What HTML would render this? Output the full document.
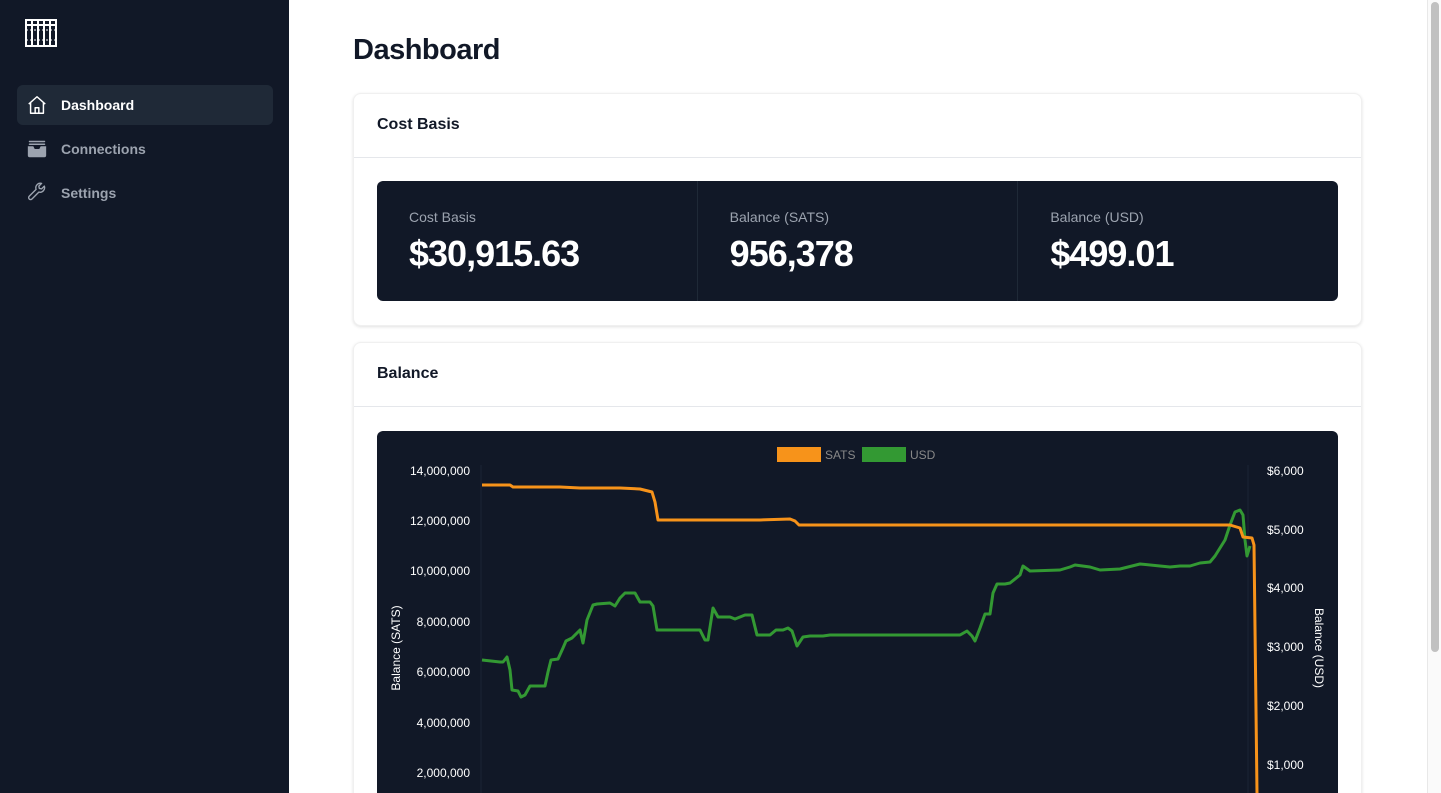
<!DOCTYPE html>
<html style="overflow:hidden"><head><meta charset="utf-8"><style>
*{box-sizing:border-box;margin:0;padding:0}
html,body{width:1441px;height:793px;overflow:hidden}
body{background:#fff;font-family:"Liberation Sans",sans-serif;position:relative}
.side{position:absolute;left:0;top:0;width:289px;height:793px;background:#111827}
.nav{position:absolute;left:17px;width:256px;height:40px;border-radius:6px;display:flex;align-items:center;padding-left:44px;font-size:14px;font-weight:bold;color:#9ca3af}
.nav.a{background:#1f2937;color:#fff}
.nav svg{position:absolute;left:9px;top:9px}
h1{position:absolute;left:353px;top:34px;font-size:29px;font-weight:bold;color:#111827;letter-spacing:-0.5px}
.card{position:absolute;left:353px;width:1009px;background:#fff;border-radius:8px;box-shadow:0 1px 3px rgba(0,0,0,.12);border:1px solid #f0f0f0}
.card .h{height:64px;border-bottom:1px solid #e5e7eb;padding:22px 0 0 23px;font-size:16px;font-weight:bold;color:#111827}
.stats{position:absolute;left:23px;top:87px;width:961px;height:120px;background:#111827;border-radius:6px;display:flex}
.stat{flex:1;padding:28px 32px;border-left:1px solid #1f2937}
.stat:first-child{border-left:none}
.stat .l{font-size:14px;color:#9ca3af}
.stat .v{font-size:36px;font-weight:bold;color:#fff;margin-top:8px;letter-spacing:-1px}
.sb{position:absolute;left:1427px;top:0;width:14px;height:793px;background:#fafafa;border-left:1px solid #e8e8e8}
.sb div{position:absolute;left:3px;top:2px;width:8px;height:650px;background:#c1c1c1;border-radius:4px}
</style></head><body>
<div class="side">
<svg style="position:absolute;left:25px;top:19px" width="32" height="28" viewBox="0 0 32 28" fill="none" stroke="#fff" stroke-width="2"><rect x="1" y="1" width="30" height="26"/><line x1="1" y1="6" x2="31" y2="6"/><line x1="7" y1="1" x2="7" y2="27"/><line x1="13" y1="1" x2="13" y2="27"/><line x1="19" y1="1" x2="19" y2="27"/><line x1="25" y1="1" x2="25" y2="27"/><line x1="1" y1="21" x2="31" y2="21" stroke-width="1" stroke-dasharray="2 2"/><line x1="1" y1="11" x2="31" y2="11" stroke-width="1" stroke-dasharray="2 2"/></svg>
<div class="nav a" style="top:85px"><svg width="22" height="22" viewBox="0 0 24 24" fill="none" stroke="#fff" stroke-width="1.6" stroke-linejoin="round"><path d="M3 11 12 3l9 8M5 9v12h14V9M10 21v-6h4v6"/></svg>Dashboard</div>
<div class="nav" style="top:129px"><svg width="22" height="22" viewBox="0 0 24 24" fill="#9ca3af"><rect x="3" y="3" width="18" height="1.6" rx=".8"/><rect x="3" y="6" width="18" height="1.6" rx=".8"/><path d="M2 9h6l1.5 3h5L16 9h6v10a2 2 0 0 1-2 2H4a2 2 0 0 1-2-2z"/></svg>Connections</div>
<div class="nav" style="top:173px"><svg width="22" height="22" viewBox="0 0 24 24" fill="none" stroke="#9ca3af" stroke-width="1.5" stroke-linejoin="round"><path d="M20 4.5l-3 3-2.5-.5-.5-2.5 3-3a5 5 0 0 0-6 6.5L3.5 15.5a2.1 2.1 0 0 0 3 3L14 11a5 5 0 0 0 6-6.5z"/></svg>Settings</div>
</div>
<h1>Dashboard</h1>
<div class="card" style="top:93px;height:233px"><div class="h">Cost Basis</div>
<div class="stats">
<div class="stat"><div class="l">Cost Basis</div><div class="v">$30,915.63</div></div>
<div class="stat"><div class="l">Balance (SATS)</div><div class="v">956,378</div></div>
<div class="stat"><div class="l">Balance (USD)</div><div class="v">$499.01</div></div>
</div></div>
<div class="card" style="top:342px;height:460px"><div class="h">Balance</div></div>
<svg style="position:absolute;left:377px;top:431px" width="961" height="362" viewBox="377 431 961 362">
<rect x="377" y="431" width="961" height="380" rx="6" fill="#111827"/>
<g stroke="#1c2434" stroke-width="1"><line x1="481" y1="465" x2="481" y2="793"/><line x1="1248" y1="465" x2="1248" y2="793"/></g>
<rect x="777" y="447" width="44" height="15" fill="#f7931a"/><text x="825" y="459" fill="#888" font-size="12" font-family="Liberation Sans">SATS</text>
<rect x="862" y="447" width="44" height="15" fill="#339933"/><text x="910" y="459" fill="#888" font-size="12" font-family="Liberation Sans">USD</text>
<g fill="#fff" font-size="12" font-family="Liberation Sans" text-anchor="end">
<text x="470" y="475">14,000,000</text><text x="470" y="525">12,000,000</text><text x="470" y="575">10,000,000</text><text x="470" y="626">8,000,000</text><text x="470" y="676">6,000,000</text><text x="470" y="727">4,000,000</text><text x="470" y="777">2,000,000</text></g>
<g fill="#fff" font-size="12" font-family="Liberation Sans">
<text x="1267" y="475">$6,000</text><text x="1267" y="534">$5,000</text><text x="1267" y="592">$4,000</text><text x="1267" y="651">$3,000</text><text x="1267" y="710">$2,000</text><text x="1267" y="769">$1,000</text></g>
<text transform="translate(400,648) rotate(-90)" fill="#fff" font-size="12" font-family="Liberation Sans" text-anchor="middle">Balance (SATS)</text>
<text transform="translate(1315,648) rotate(90)" fill="#fff" font-size="12" font-family="Liberation Sans" text-anchor="middle">Balance (USD)</text>
<polyline fill="none" stroke="#339933" stroke-width="3" stroke-linejoin="round" points="482,660 500,662 503,662 507,657 510,670 512,690 518,691 521,697 525,695 530,686 545,686 548,672 551,660 558,659 563,648 566,641 572,638 580,630 583,643 587,620 593,605 597,604 610,603 615,606 620,598 625,593 635,593 640,602 650,602 653,606 657,630 700,630 705,640 708,640 713,608 718,617 730,617 735,619 745,615 752,615 757,635 770,635 776,630 783,630 788,628 792,631 797,646 803,637 810,636 823,636 830,635 960,635 967,631 972,636 975,641 980,628 985,614 990,614 993,593 997,584 1005,584 1010,583 1020,575 1023,566 1030,571 1060,570 1070,567 1075,565 1090,567 1100,570 1120,569 1140,564 1160,566 1170,567 1180,566 1190,566 1200,563 1210,562 1215,556 1220,548 1225,540 1230,525 1235,512 1240,510 1243,515 1245,540 1247,556 1250,546"/>
<polyline fill="none" stroke="#f7931a" stroke-width="3" stroke-linejoin="round" points="482,485 510,485 513,487 560,487 580,488 620,488 640,489 652,492 655,502 658,520 700,520 760,520 790,519 795,521 799,525 1230,525 1240,528 1243,537 1252,538 1254,545 1257,793"/>
</svg>
<div class="sb"><div></div></div>
</body></html>
